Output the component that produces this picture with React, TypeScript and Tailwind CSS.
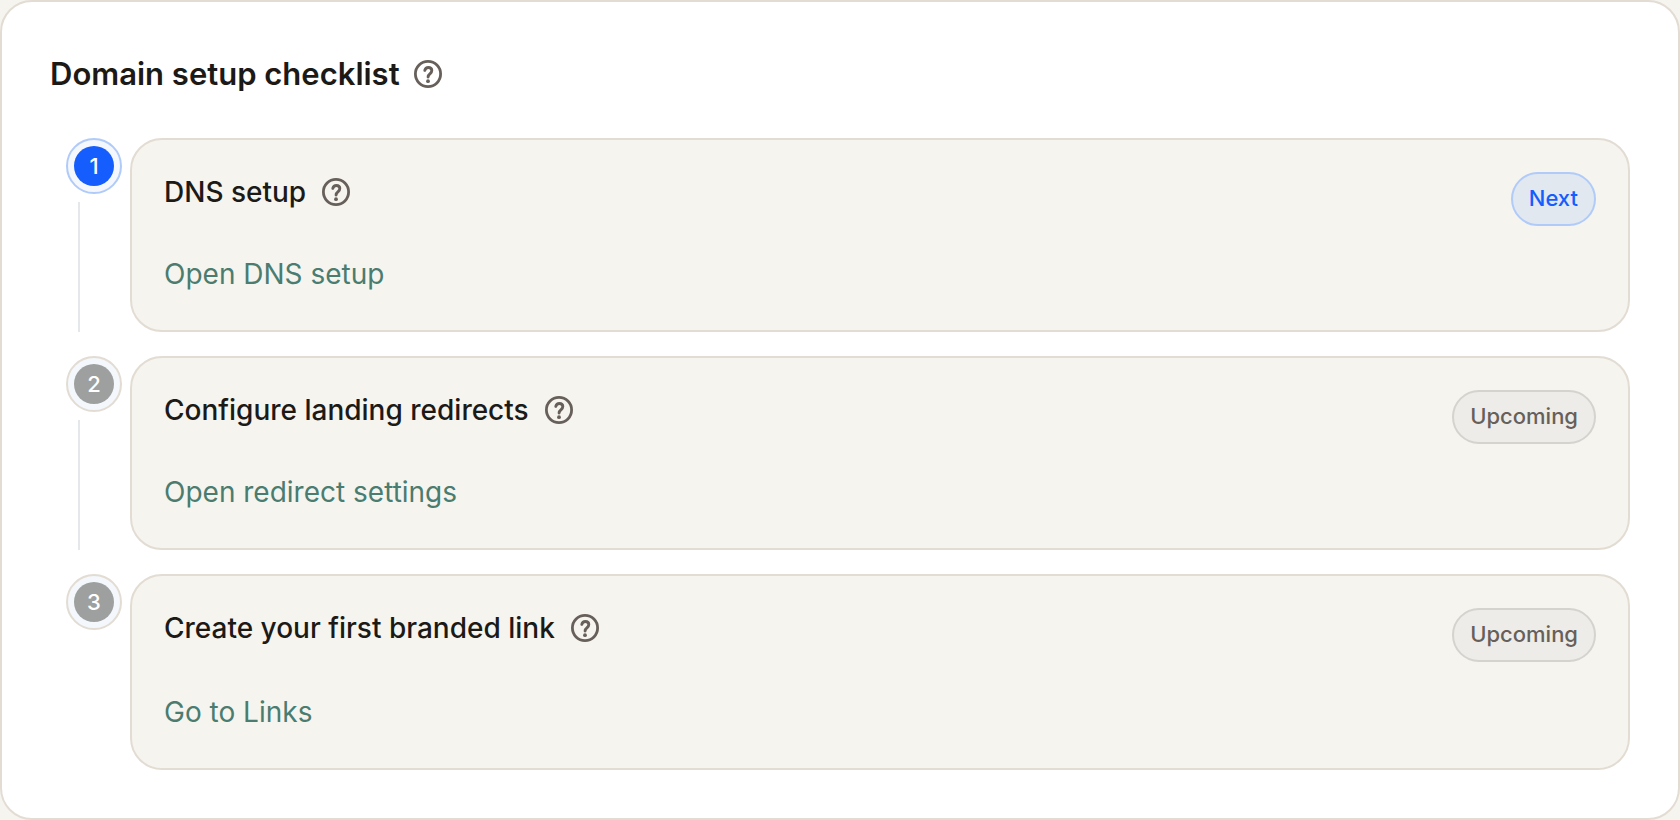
type Step = {
  title: string;
  action: string;
  href: string;
  status: 'next' | 'upcoming';
};

const steps: Step[] = [
  { title: 'DNS setup', action: 'Open DNS setup', href: '#dns', status: 'next' },
  { title: 'Configure landing redirects', action: 'Open redirect settings', href: '#redirects', status: 'upcoming' },
  { title: 'Create your first branded link', action: 'Go to Links', href: '#links', status: 'upcoming' },
];

function HelpButton({ label }: { label: string }) {
  return (
    <button type="button" aria-label={label} className="size-7 shrink-0 rounded-full text-[#67605a]">
      <svg viewBox="0 0 28 28" fill="none" stroke="currentColor" className="size-7">
        <circle cx="14" cy="14" r="12.6" strokeWidth="2.8" />
        <path
          d="M10.8 10.4C11.3 8.5 12.7 7.5 14.3 7.5c2 0 3.5 1.2 3.5 3.1 0 1.4-.8 2.2-1.7 3.1-1.2 1-1.9 1.8-2 3.3"
          strokeWidth="2.9"
          strokeLinecap="round"
        />
        <circle cx="14" cy="21.2" r="1.9" fill="currentColor" stroke="none" />
      </svg>
    </button>
  );
}

function StatusBadge({ status }: { status: Step['status'] }) {
  const isNext = status === 'next';
  return (
    <span
      className={`shrink-0 rounded-full border-2 px-4 pt-2 pb-2.5 text-[22px] leading-8 font-medium ${
        isNext ? 'border-[#b0cbfa] bg-[#e1e8f0] text-[#155dfc]' : 'border-[#d4d3ce] bg-[#edece8] text-[#67605a]'
      }`}
    >
      {isNext ? 'Next' : 'Upcoming'}
    </span>
  );
}

function StepMarker({ index, status, last }: { index: number; status: Step['status']; last: boolean }) {
  const isNext = status === 'next';
  return (
    <div className="flex w-18 shrink-0 flex-col items-start">
      <div
        className={`ml-4 flex size-14 items-center justify-center rounded-full border-2 bg-[#f4f7fb] ${
          isNext ? 'border-[#b0cbfa]' : 'border-[#e2dcd3]'
        }`}
      >
        <span
          className={`flex size-10 items-center justify-center rounded-full text-[22px] leading-8 font-medium text-white ${
            isNext ? 'bg-[#155dfc]' : 'bg-[#9da09f]'
          }`}
        >
          {index}
        </span>
      </div>
      {!last && <div className="mt-2 ml-7 w-0.5 flex-1 bg-[#e4e8ea]" />}
    </div>
  );
}

export default function App() {
  return (
    <main className="min-h-screen bg-[#f6f4ef] font-['Inter',sans-serif] text-[#1b1a17]">
      <section className="flex min-h-screen flex-col rounded-[32px] border-2 border-[#e2dcd3] bg-white p-12">
        <div className="mb-10 flex items-center gap-3.5">
          <h1 className="text-[31px] leading-12 font-semibold">Domain setup checklist</h1>
          <HelpButton label="About the domain setup checklist" />
        </div>

        <ol className="flex flex-1 flex-col gap-6">
          {steps.map((step, i) => (
            <li key={step.title} className="flex gap-2 last:flex-1">
              <StepMarker index={i + 1} status={step.status} last={i === steps.length - 1} />
              <div className="flex min-w-0 flex-1 flex-col justify-between gap-6 rounded-[32px] border-2 border-[#e2dcd3] bg-[#f6f4ef] p-8">
                <div className="flex items-start justify-between">
                  <div className="flex items-center gap-4">
                    <h2 className="text-[28px] leading-10 font-medium">{step.title}</h2>
                    <HelpButton label={`About ${step.title}`} />
                  </div>
                  <StatusBadge status={step.status} />
                </div>
                <a href={step.href} className="self-start text-[28px] leading-12 text-[#4a7c6f]">
                  {step.action}
                </a>
              </div>
            </li>
          ))}
        </ol>
      </section>
    </main>
  );
}
